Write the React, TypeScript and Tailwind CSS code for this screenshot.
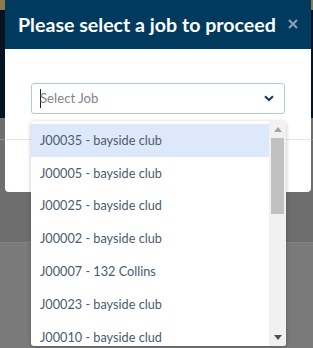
import React from "react";

const items = [
  "J00035 - bayside club",
  "J00005 - bayside club",
  "J00025 - bayside clud",
  "J00002 - bayside club",
  "J00007 - 132 Collins",
  "J00023 - bayside club",
  "J00010 - bayside clud",
];

export default function App() {
  return (
    <div
      className="relative w-[313px] h-[348px] overflow-hidden bg-[#7a7a7a]"
      style={{ fontFamily: 'Lato, "Open Sans", sans-serif' }}
    >
      {/* backdrop page */}
      <div className="flex flex-col">
        <div className="h-[10px] bg-[#8a7a4c]" />
        <div className="h-[108px] bg-[#07131e]" />
        <div className="h-[21px] bg-[#6e6e6e]" />
        <div className="h-px bg-[#8c8c8c]" />
        <div className="h-[102px] bg-[#6e6e6e]" />
        <div className="h-px bg-[#828282]" />
      </div>

      {/* modal */}
      <div className="absolute left-[5px] top-0 w-[306px]">
        <div className="h-[49px] bg-[#003a5e] flex items-center justify-between pl-[13px] pr-[13px]">
          <span className="text-white font-bold text-[19.6px] leading-none whitespace-nowrap">
            Please select a job to proceed
          </span>
          <svg width="10" height="10" viewBox="0 0 10 10" className="mt-[-1px]">
            <path d="M1 1 L9 9 M9 1 L1 9" stroke="#8aa0b3" strokeWidth="2.2" />
          </svg>
        </div>
        <div className="h-[143px] bg-white rounded-b-[4px] flex flex-col">
          <div className="px-[26px] pt-[34px]">
            <div className="h-[31px] border border-[#a6d8b6] rounded-[3px] flex items-center justify-between pl-[8px] pr-[10px]">
              <div className="flex items-center">
                <div className="w-px h-[19px] bg-[#222]" />
                <span className="text-[13.2px] text-[#858585] ml-[-1px] whitespace-nowrap">Select Job</span>
              </div>
              <svg width="10" height="7" viewBox="0 0 10 7">
                <path d="M1 1.2 L5 5 L9 1.2" stroke="#1d3c5a" strokeWidth="2.2" fill="none" />
              </svg>
            </div>
          </div>
          <div className="mt-[25px] border-t border-[#e5e5e5]" />
        </div>
      </div>

      {/* dropdown */}
      <div className="absolute left-[31px] top-[121px] w-[255px] h-[225px] bg-white shadow-[0_1px_4px_rgba(0,0,0,0.25)] rounded-[3px] flex overflow-hidden">
        <div className="flex-1 pt-[3px] flex flex-col">
          {items.map((t, i) => (
            <div
              key={t}
              className={`h-[32.8px] shrink-0 flex items-center pl-[9px] text-[12.7px] text-[#4a5c6d] whitespace-nowrap ${
                i === 0 ? "bg-[#dde9fb]" : ""
              }`}
            >
              {t}
            </div>
          ))}
        </div>
        <div className="w-[17px] bg-[#f1f1f1] flex flex-col items-center">
          <div className="h-[17px] flex items-center justify-center">
            <svg width="8" height="5" viewBox="0 0 8 5">
              <path d="M0 5 L4 0 L8 5 Z" fill="#a3a3a3" />
            </svg>
          </div>
          <div className="w-[13px] h-[76px] bg-[#c1c1c1]" />
          <div className="flex-1" />
          <div className="h-[17px] flex items-center justify-center">
            <svg width="8" height="5" viewBox="0 0 8 5">
              <path d="M0 0 L8 0 L4 5 Z" fill="#505050" />
            </svg>
          </div>
        </div>
      </div>
    </div>
  );
}
